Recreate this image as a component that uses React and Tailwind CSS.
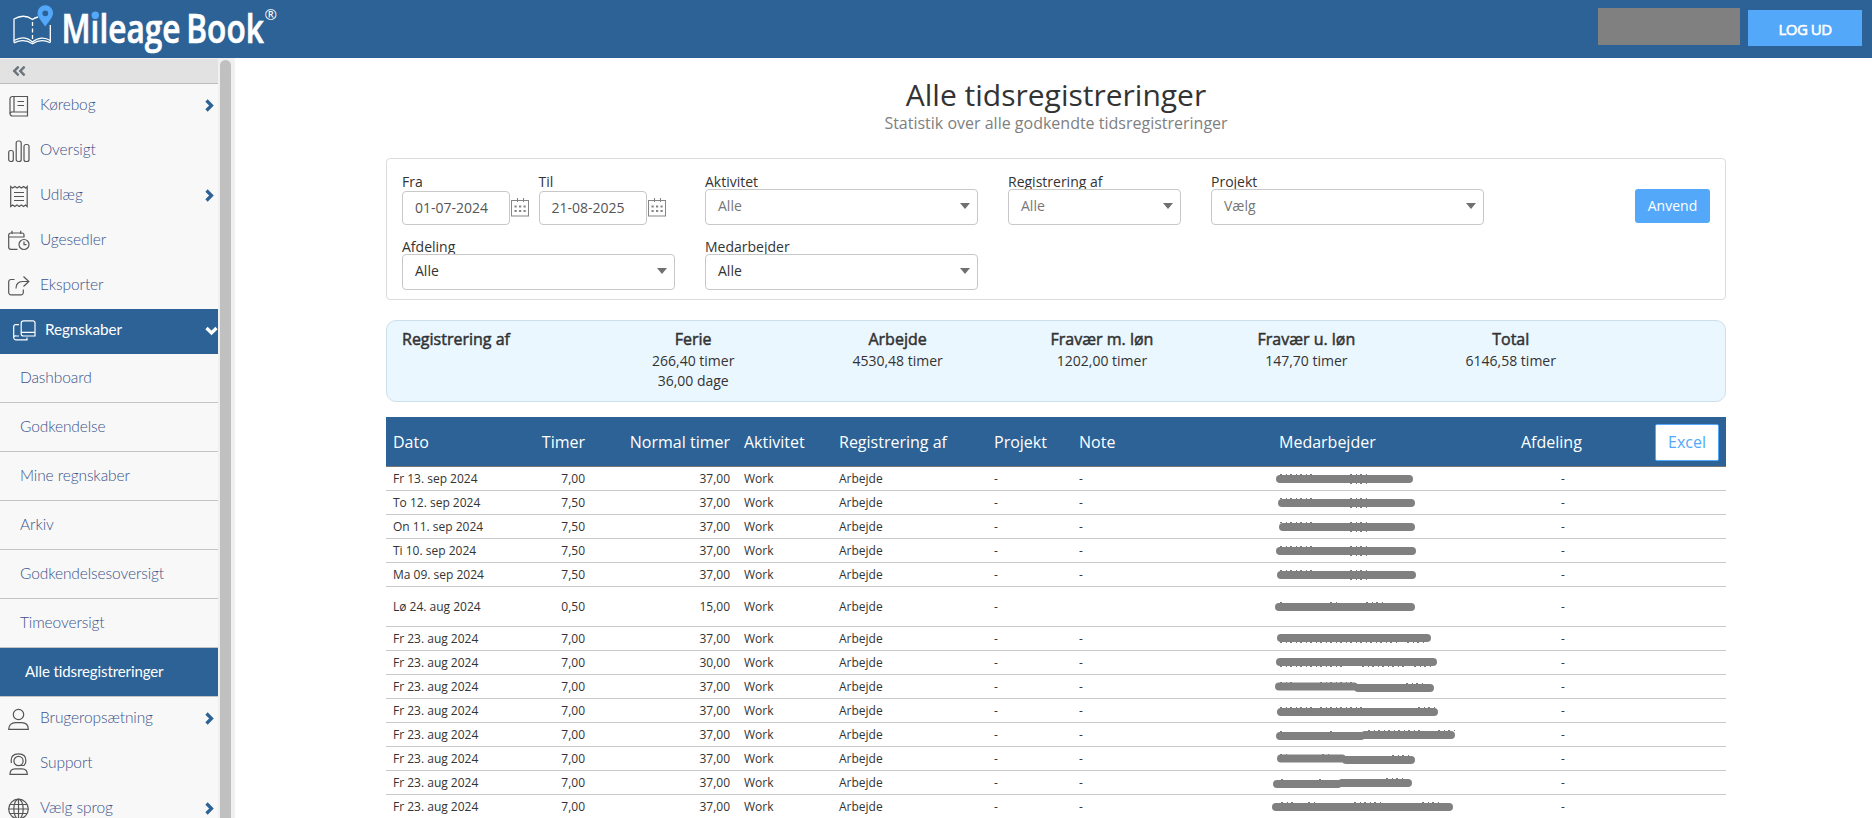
import React from 'react';
import { FaAngleDoubleLeft } from 'react-icons/fa';

// Sidebar icons, all on a 22x22 grid with a thin outline
const icons = {
  book: (
    <>
      <path d="M4.5 1.5H19.5V21H4.5A2.5 2.5 0 0 1 2 18.500V4A2.500 2.500 0 0 1 4.500 1.500Z" />
      <path d="M2 18.500A2 2 0 0 1 4.500 17H19.500M6 1.500V17M9.500 6.500H16M9.500 10.500H16" />
    </>
  ),
  chart: (
    <>
      <rect x="0.700" y="10.500" width="4.600" height="11" rx="2" />
      <rect x="8.200" y="1" width="5" height="20.500" rx="2" />
      <rect x="16" y="4.500" width="5" height="17" rx="2" />
    </>
  ),
  receipt: (
    <path d="M2.700 1.500l2 1.600 2.200-1.600 2.200 1.600 2.100-1.600 2.200 1.600 2.200-1.600 2.200 1.600 1.400-1.600v20l-1.600-1.500-2.100 1.500-2.200-1.500-2.100 1.500-2.200-1.500-2.200 1.500-2.100-1.500-2 1.500zM6 7.500h10M6 11.500h10M6 15.500h10" />
  ),
  calendar: (
    <>
      <path d="M9.500 19.300H3A2.300 2.300 0 0 1 .7 17V5A2 2 0 0 1 2.700 3H14A2 2 0 0 1 16 5V7.500M.7 7H16M4 .8V4M12.700 .8V4" />
      <circle cx="16" cy="14.500" r="5" />
      <path d="M16 11.500V14.700H18.500" />
    </>
  ),
  share: (
    <>
      <path d="M6.500 4.500H3A2.300 2.300 0 0 0 .7 6.800V17.500A2.300 2.300 0 0 0 3 19.800H13A2.300 2.300 0 0 0 15.300 17.500V14.500" />
      <path d="M8 13.500C8 9 10.500 6.500 14.500 6.500H20.500M15.500 1.500L20.800 6.500L15.500 11.500" />
    </>
  ),
  books: (
    <>
      <path d="M10.500 .8H20A2 2 0 0 1 22 2.800V16H10.500A2.300 2.300 0 0 1 8.200 13.700V3A2.300 2.300 0 0 1 10.500 .8ZM8.500 12.300H22" />
      <path d="M6 4.700H2.700A2 2 0 0 0 .7 6.700V17.500A2.300 2.300 0 0 0 3 19.800H14V17.500M.7 17A2 2 0 0 1 3 16H6" />
    </>
  ),
  user: (
    <>
      <circle cx="10.500" cy="6.500" r="5.200" />
      <path d="M.7 21.300C.7 17 3.500 14.700 7.500 14.700H13.500C17.500 14.700 20.300 17 20.300 21.300Z" />
    </>
  ),
  support: (
    <>
      <circle cx="10.500" cy="8" r="4.600" />
      <path d="M3.500 10C2 3 6 .8 10.500 .8S19 3 17.500 10L16 12.500H11.500" />
      <path d="M2 21.300C2 17.500 4 15.800 7 15.800H14C17 15.800 19.300 17.500 19.300 21.300Z" />
    </>
  ),
  globe: (
    <>
      <circle cx="10.500" cy="11" r="9.800" />
      <ellipse cx="10.500" cy="11" rx="4.700" ry="9.800" />
      <path d="M10.500 1.200V20.800M2 6.500H19M.7 11H20.300M2 15.500H19" />
    </>
  ),
};

function MenuIcon({ name }) {
  return (
    <svg width="23" height="23" viewBox="0 0 23 23" fill="none" stroke="currentColor" strokeWidth="1.2" className="shrink-0">
      {icons[name]}
    </svg>
  );
}

const topMenu = [
  { label: 'Kørebog', icon: 'book', arrow: true },
  { label: 'Oversigt', icon: 'chart' },
  { label: 'Udlæg', icon: 'receipt', arrow: true },
  { label: 'Ugesedler', icon: 'calendar' },
  { label: 'Eksporter', icon: 'share' },
];

const subMenu = ['Dashboard', 'Godkendelse', 'Mine regnskaber', 'Arkiv', 'Godkendelsesoversigt', 'Timeoversigt'];

const bottomMenu = [
  { label: 'Brugeropsætning', icon: 'user', arrow: true },
  { label: 'Support', icon: 'support' },
  { label: 'Vælg sprog', icon: 'globe', arrow: true },
];

const totals = [
  { name: 'Ferie', lines: ['266,40 timer', '36,00 dage'] },
  { name: 'Arbejde', lines: ['4530,48 timer'] },
  { name: 'Fravær m. løn', lines: ['1202,00 timer'] },
  { name: 'Fravær u. løn', lines: ['147,70 timer'] },
  { name: 'Total', lines: ['6146,58 timer'] },
];

// bar: stroke path that hides the employee's name, specks: what sticks out around it
const rows = [
  { date: 'Fr 13. sep 2024', hours: '7,00', normal: '37,00', note: '-', bar: 'M8 12H137', specks: 'M8 7.500H40M78 7.500H97M78 16.500H97' },
  { date: 'To 12. sep 2024', hours: '7,50', normal: '37,00', note: '-', bar: 'M10 12H139', specks: 'M8 7.500H40M78 7.500H97M78 16.500H97' },
  { date: 'On 11. sep 2024', hours: '7,50', normal: '37,00', note: '-', bar: 'M11 12H139', specks: 'M8 7.500H40M78 7.500H97M78 16.500H97' },
  { date: 'Ti 10. sep 2024', hours: '7,50', normal: '37,00', note: '-', bar: 'M8 12H140', specks: 'M8 7.500H40M78 7.500H97M78 16.500H97' },
  { date: 'Ma 09. sep 2024', hours: '7,50', normal: '37,00', note: '-', bar: 'M9 12H140', specks: 'M8 7.500H40M78 7.500H97M78 16.500H97' },
  { date: 'Lø 24. aug 2024', hours: '0,50', normal: '15,00', note: '', bar: 'M7 12H139', specks: 'M8 7.500H14M58 7.500H65M94 7.500H113', tall: true },
  { date: 'Fr 23. aug 2024', hours: '7,00', normal: '37,00', note: '-', bar: 'M9 11H155', specks: 'M8 15.500H128M135 15.500H154' },
  { date: 'Fr 23. aug 2024', hours: '7,00', normal: '30,00', note: '-', bar: 'M8 11H161', specks: 'M8 15.500H72M90 15.500H135M142 15.500H160' },
  { date: 'Fr 23. aug 2024', hours: '7,00', normal: '37,00', note: '-', bar: 'M7 11.500H82M86 13H158', specks: 'M8 7.500H20M48 7.500H84M134 8.500H152' },
  { date: 'Fr 23. aug 2024', hours: '7,00', normal: '37,00', note: '-', bar: 'M9 13H162', specks: 'M8 8.500H40M48 8.500H92M146 8.500H163' },
  { date: 'Fr 23. aug 2024', hours: '7,00', normal: '37,00', note: '-', bar: 'M8 13H89M93 12H179', specks: 'M8 8.500H14M58 8.500H64M96 7.500H148M166 7.500H184' },
  { date: 'Fr 23. aug 2024', hours: '7,00', normal: '37,00', note: '-', bar: 'M9 11.500H70M74 13H139', specks: 'M8 7.500H18M50 7.500H60M120 8.500H138' },
  { date: 'Fr 23. aug 2024', hours: '7,00', normal: '37,00', note: '-', bar: 'M5 13H66M70 12H136', specks: 'M9 8.500H12M47 8.500H53M114 7.500H131' },
  { date: 'Fr 23. aug 2024', hours: '7,00', normal: '37,00', note: '-', bar: 'M4 12H177', specks: 'M9 7.500H22M36 7.500H44M82 7.500H112M150 7.500H168' },
];

const columns = 'grid grid-cols-[120px_86px_145px_95px_155px_85px_200px_242px_98px_1fr] items-center';

function Logo() {
  return (
    <svg width="290" height="58" viewBox="0 0 290 58" className="shrink-0">
      <g fill="none" stroke="#fff" strokeWidth="1.300">
        <path d="M14 42.500V19C20 15.500 27 15.500 32.500 19.500C34 18.400 36 17.500 38 17M50.300 25V42.500" />
        <path d="M14 40.500C20 37 27 37 32.500 42C38 37 45 37 50.300 40.500" />
        <path d="M14 42.800C20 40 27 40 32.500 43.800C38 40 45 40 50.300 42.800" />
        <path d="M32.500 22V40" strokeDasharray="4 2.500" />
      </g>
      <path d="M45.300 26.500C42 21.500 37.500 17.500 37.500 13A7.700 7.700 0 0 1 53 13C53 17.500 48.500 21.500 45.300 26.500Z" fill="#54a8f9" />
      <circle cx="45.300" cy="13.300" r="2.900" fill="#2c6296" />
      <g fill="#fff" fontFamily="'Open Sans', sans-serif">
        <g transform="translate(61.500 43) scale(0.73 1)" fontSize="40" fontWeight="600" stroke="#fff" strokeWidth="0.700">
          <text textLength="163" lengthAdjust="spacingAndGlyphs">Mileage</text>
          <text x="171" textLength="106" lengthAdjust="spacingAndGlyphs">Book</text>
        </g>
        <text x="264.500" y="20" fontSize="15">®</text>
      </g>
      <circle cx="95.300" cy="15.300" r="3.700" fill="#54a8f9" />
    </svg>
  );
}

function Chevron({ down }) {
  return (
    <svg width="13" height="13" viewBox="0 0 13 13" fill="none" stroke="currentColor" strokeWidth="3.2" className="mb-[3px]">
      <path d={down ? 'M1.500 4L6.500 9L11.500 4' : 'M3.500 1.500L8.500 6.500L3.500 11.500'} />
    </svg>
  );
}

function MenuItem({ label, icon, arrow }) {
  return (
    <div className="flex h-[45px] shrink-0 items-center pl-[8px] pr-[2px] text-[#555]">
      <MenuIcon name={icon} />
      <span className="ml-[9px] flex-1 pb-[3px] text-[15.500px] tracking-[-0.100px] text-[#3a5289]">{label}</span>
      {arrow && (
        <span className="text-[#2c6296]">
          <Chevron />
        </span>
      )}
    </div>
  );
}

function Sidebar() {
  return (
    <aside className="flex w-[235px] shrink-0 bg-[#f0f0f0] pt-px font-['Lato',sans-serif] font-light">
      <nav className="flex w-[218px] flex-col overflow-hidden bg-[#f8f8f8]">
        <div className="flex h-[25px] shrink-0 items-center border-b border-[#bdbdbd] bg-[#e2e2e2] pl-[11px]">
          <FaAngleDoubleLeft className="size-[16px] text-[#6c757d]" />
        </div>
        {topMenu.map((item) => (
          <MenuItem key={item.label} {...item} />
        ))}
        <div className="flex h-[45px] shrink-0 items-center bg-[#2c6296] pl-[13px] text-white">
          <MenuIcon name="books" />
          <span className="ml-[9px] flex-1 pb-[4px] text-[15.300px] font-normal tracking-[-0.100px]">Regnskaber</span>
          <Chevron down />
        </div>
        {subMenu.map((label) => (
          <div
            key={label}
            className="flex h-[49px] shrink-0 items-center border-b border-[#c4c4c4] pl-[20px] text-[15.500px] tracking-[-0.100px] text-[#3a5289]"
          >
            {label}
          </div>
        ))}
        <div className="flex h-[49px] shrink-0 items-center border-b border-[#c4c4c4] bg-[#2c6296] pb-px pl-[25px] text-[15px] font-normal tracking-[-0.100px] text-white">
          Alle tidsregistreringer
        </div>
        {bottomMenu.map((item) => (
          <MenuItem key={item.label} {...item} />
        ))}
      </nav>
      <div className="ml-[2px] mt-px w-[11px] rounded-t-full bg-[#c0c0c0]" />
    </aside>
  );
}

function Select({ label, value, className, dark }) {
  return (
    <div className={className}>
      <div className="h-[15px] text-[14px] leading-[15px] text-[#333]">{label}</div>
      <div className="relative flex h-[36px] items-center justify-between rounded-[4px] border border-[#c8c8c8] bg-white pl-[12px] pr-[7px] text-[14px]">
        <span className={dark ? 'pb-[3px] text-[#333]' : 'pb-[3px] text-[#777]'}>{value}</span>
        <svg width="10" height="6" viewBox="0 0 10 6" className="mb-[2px]">
          <path d="M0 0H10L5 6Z" fill="#707070" />
        </svg>
      </div>
    </div>
  );
}

function DateField({ label, value }) {
  return (
    <div className="w-[137px]">
      <div className="h-[17px] text-[14px] leading-[15px] text-[#333]">{label}</div>
      <div className="flex items-center">
        <div className="flex h-[34px] w-[108px] items-center rounded-[4px] border border-[#c8c8c8] pb-px pl-[12px] text-[14px] text-[#555]">
          {value}
        </div>
        <svg width="18" height="19" viewBox="0 0 18 19" className="mb-[2px] ml-px" fill="none" stroke="#858585">
          <rect x="0.500" y="2.500" width="17" height="15.500" />
          <path d="M6.500 0V4M12.500 0V4" />
          <path d="M3.500 8.500H15M3.500 13H15" strokeWidth="2.200" strokeDasharray="2.200 2.300" />
        </svg>
      </div>
    </div>
  );
}

function Filters() {
  return (
    <section className="mt-[25px] flex h-[142px] justify-between rounded-[4px] border border-[#dcdcdc] pl-[15px] pr-[15px] pt-[15px]">
      <div className="flex flex-col gap-[14px]">
        <div className="flex gap-[30px]">
          <div className="flex w-[273px]">
            <DateField label="Fra" value="01-07-2024" />
            <DateField label="Til" value="21-08-2025" />
          </div>
          <Select label="Aktivitet" value="Alle" className="w-[273px]" />
          <Select label="Registrering af" value="Alle" className="w-[173px]" />
          <Select label="Projekt" value="Vælg" className="w-[273px]" />
        </div>
        <div className="flex gap-[30px]">
          <Select label="Afdeling" value="Alle" className="w-[273px]" dark />
          <Select label="Medarbejder" value="Alle" className="w-[273px]" dark />
        </div>
      </div>
      <button className="mt-[15px] h-[34px] w-[75px] rounded-[3px] bg-[#54a8f9] pb-px text-[14px] text-white">Anvend</button>
    </section>
  );
}

function Summary() {
  return (
    <section className="mt-[20px] flex h-[82px] rounded-[10px] border border-[#cddfea] bg-[#ebf7ff] pl-[15px] pt-[7px] text-[#333]">
      <div className="w-[189px] text-[16px] leading-[22px] [-webkit-text-stroke:0.5px_#333]">Registrering af</div>
      {totals.map((total) => (
        <div key={total.name} className="w-[204.400px] text-center text-[14px] leading-[20px]">
          <div className="mb-px text-[16px] leading-[22px] [-webkit-text-stroke:0.5px_#333]">{total.name}</div>
          {total.lines.map((line) => (
            <div key={line}>{line}</div>
          ))}
        </div>
      ))}
    </section>
  );
}

function RegistrationTable() {
  return (
    <section className="mt-[15px]">
      <div className={`${columns} h-[50px] border-b border-[#777] bg-[#2c6296] text-[16px] text-white`}>
        <span className="px-[7px]">Dato</span>
        <span className="px-[7px] text-right">Timer</span>
        <span className="whitespace-nowrap px-[7px] text-right">Normal timer</span>
        <span className="px-[7px]">Aktivitet</span>
        <span className="px-[7px]">Registrering af</span>
        <span className="px-[7px]">Projekt</span>
        <span className="px-[7px]">Note</span>
        <span className="px-[7px]">Medarbejder</span>
        <span className="px-[7px]">Afdeling</span>
        <button className="mr-[7px] mt-px h-[37px] w-[64px] justify-self-end rounded-[2px] border border-[#54a8f9] bg-white pb-px text-[#54a8f9]">
          Excel
        </button>
      </div>
      {rows.map((row, i) => (
        <div
          key={i}
          className={`${columns} ${row.tall ? 'h-[40px]' : 'h-[24px]'} border-b border-[#c8c8c8] text-[12px] text-[#333]`}
        >
          <span className="px-[7px]">{row.date}</span>
          <span className="px-[7px] text-right">{row.hours}</span>
          <span className="px-[7px] text-right">{row.normal}</span>
          <span className="px-[7px]">Work</span>
          <span className="px-[7px]">Arbejde</span>
          <span className="px-[7px]">-</span>
          <span className="px-[7px]">{row.note}</span>
          <svg width="200" height="23" viewBox="0 0 200 23">
            <path d={row.specks} stroke="#777" strokeWidth="1" strokeDasharray="2 4 1 3" />
            <path d={row.bar} stroke="#808080" strokeWidth="8" strokeLinecap="round" />
          </svg>
          <span className="text-center">-</span>
        </div>
      ))}
    </section>
  );
}

export default function App() {
  return (
    <div className="flex h-screen flex-col overflow-hidden bg-white font-['Open_Sans',sans-serif]">
      <header className="flex h-[58px] shrink-0 items-start justify-between bg-[#2c6296] pr-[10px]">
        <Logo />
        <div className="flex gap-[8px]">
          <div className="mt-[8px] h-[37px] w-[142px] bg-[#808080]" />
          <button className="mt-[10px] h-[36px] w-[114px] bg-[#54a8f9] pt-[3px] text-[15px] tracking-[-0.500px] text-white [-webkit-text-stroke:0.6px_#fff]">
            LOG UD
          </button>
        </div>
      </header>
      <div className="flex min-h-0 flex-1">
        <Sidebar />
        <main className="min-w-0 flex-1 pl-[151px]">
          <div className="w-[1340px]">
            <h1 className="pt-[19px] text-center text-[30px] leading-[36px] text-[#333]">Alle tidsregistreringer</h1>
            <p className="text-center text-[16px] leading-[20px] text-[#808080]">Statistik over alle godkendte tidsregistreringer</p>
            <Filters />
            <Summary />
            <RegistrationTable />
          </div>
        </main>
      </div>
    </div>
  );
}
